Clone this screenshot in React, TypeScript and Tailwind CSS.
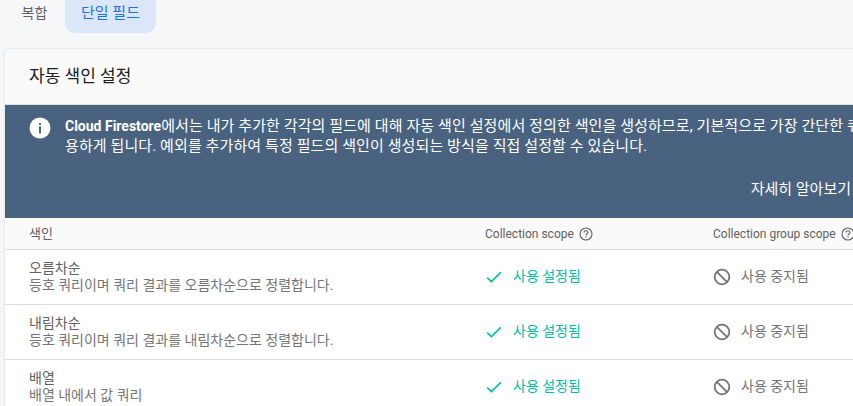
import React from "react";

function Check() {
  return (
    <svg width="18" height="18" viewBox="0 0 18 18" className="shrink-0" fill="none">
      <path d="M2.2 9.6 L6.4 13.6 L15.8 4.4" stroke="#00bfa5" strokeWidth="1.6" />
    </svg>
  );
}

function Ban() {
  return (
    <svg width="18" height="18" viewBox="0 0 18 18" className="shrink-0" fill="none">
      <circle cx="9" cy="9" r="7.3" stroke="#757575" strokeWidth="1.8" />
      <path d="M3.9 3.9 L14.1 14.1" stroke="#757575" strokeWidth="1.8" />
    </svg>
  );
}

function Help() {
  return (
    <svg width="14" height="14" viewBox="0 0 14 14" className="shrink-0" fill="none">
      <circle cx="7" cy="7" r="6" stroke="#616161" strokeWidth="1.1" />
      <path d="M5 5.6 C5 4.4 5.9 3.7 7 3.7 C8.1 3.7 9 4.4 9 5.4 C9 6.7 7 6.8 7 8.4" stroke="#616161" strokeWidth="1.1" />
      <rect x="6.4" y="9.4" width="1.2" height="1.2" fill="#616161" />
    </svg>
  );
}

function Row({ title, desc }: { title: string; desc: React.ReactNode }) {
  return (
    <div className="flex h-[55px] border-b border-[#e0e0e0] pl-6 items-center">
      <div className="w-[456px] shrink-0 text-[14px] leading-[17px] text-[#757575]">
        <div className="text-[14px] leading-[17px] text-[#616161] -mt-[1px]">{title}</div>
        <div>{desc}</div>
      </div>
      <div className="w-[228px] shrink-0 flex items-center gap-[10px] text-[14px] text-[#00bfa5]">
        <Check />
        <span className="-mt-[2px]">사용 설정됨</span>
      </div>
      <div className="flex items-center gap-[10px] text-[14px] text-[#757575]">
        <Ban />
        <span className="-mt-[2px]">사용 중지됨</span>
      </div>
    </div>
  );
}

export default function App() {
  return (
    <div
      className="w-[853px] h-[406px] overflow-hidden bg-[#f6f7f9]"
      style={{ fontFamily: 'Roboto, "Noto Sans CJK KR", sans-serif' }}
    >
      <div className="flex h-[33px] items-stretch pl-[5px] text-[14px]">
        <div className="w-[60px] pb-[7px] pr-[1px] flex items-center justify-center text-[#616161]">복합</div>
        <div className="w-[91px] pb-[7px] flex items-center justify-center rounded-b-[10px] bg-[#dbe7f8] text-[15px] text-[#1a73e8]">단일 필드</div>
      </div>
      <div className="ml-[5px] mt-4 w-[1000px] rounded-t-[4px] bg-white shadow-[0_0_2px_rgba(0,0,0,0.2)]">
        <div className="flex h-[56px] items-center rounded-t-[4px] border-b border-[#e0e0e0] bg-[#fafafa] pl-6 text-[17px] text-[#212121]">
          자동 색인 설정
        </div>
        <div className="relative h-[113px] bg-[#48627f] pl-6 pt-[11px] text-white">
          <div className="flex gap-[14px]">
            <svg width="22" height="22" viewBox="0 0 22 22" className="shrink-0 mt-[1px]">
              <circle cx="11" cy="11" r="10.5" fill="#ffffff" />
              <rect x="10" y="9.5" width="2" height="7" fill="#48627f" />
              <rect x="10" y="6" width="2" height="2" fill="#48627f" />
            </svg>
            <div className="text-[15px] leading-[20px] tracking-[0.1px] whitespace-nowrap">
              <div>
                <span className="font-bold text-[14px] tracking-normal">Cloud Firestore</span>에서는 내가 추가한 각각의 필드에 대해 자동 색인 설정에서 정의한 색인을 생성하므로, 기본적으로 가장 간단한 쿼리를 사
              </div>
              <div>용하게 됩니다. 예외를 추가하여 특정 필드의 색인이 생성되는 방식을 직접 설정할 수 있습니다.</div>
            </div>
          </div>
          <div className="w-[822px] mt-[23px] text-right text-[15px] leading-[20px]">자세히 알아보기</div>
        </div>
        <div className="flex h-[32px] items-center border-b border-[#e0e0e0] bg-[#fafafa] pl-6 text-[12px] text-[#616161]">
          <div className="w-[456px] shrink-0 text-[13px]">색인</div>
          <div className="w-[228px] shrink-0 flex items-center gap-[5px]">
            Collection scope <Help />
          </div>
          <div className="flex items-center gap-[5px]">
            Collection group scope <Help />
          </div>
        </div>
        <Row title="오름차순" desc="등호 쿼리이며 쿼리 결과를 오름차순으로 정렬합니다." />
        <Row title="내림차순" desc="등호 쿼리이며 쿼리 결과를 내림차순으로 정렬합니다." />
        <Row title="배열" desc="배열 내에서 값 쿼리" />
      </div>
    </div>
  );
}
